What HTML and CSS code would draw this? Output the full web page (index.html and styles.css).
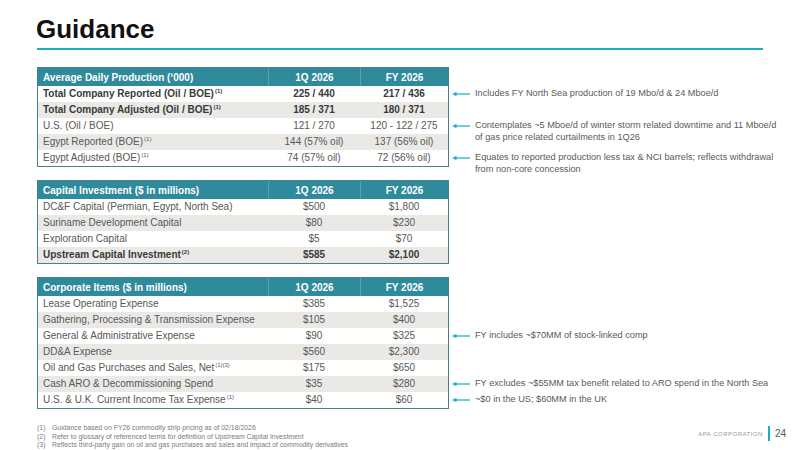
FILE: index.html
```html
<!DOCTYPE html>
<html lang="en">
<head>
    <meta charset="UTF-8">
    <meta name="viewport" content="width=device-width, initial-scale=1.0">
    <title>Guidance</title>
    <link rel="stylesheet" href="styles.css">
</head>
<body>
    <div class="slide">
        <header class="title-bar">
            <h1>Guidance</h1>
            <div class="rule"></div>
        </header>

        <main class="content">
            <section class="block">
                <table class="guide">
                    <colgroup>
                        <col class="col-label">
                        <col class="col-q">
                        <col class="col-fy">
                    </colgroup>
                    <thead>
                        <tr><th>Average Daily Production (‘000)</th><th>1Q 2026</th><th>FY 2026</th></tr>
                    </thead>
                    <tbody>
                        <tr class="strong"><td>Total Company Reported (Oil / BOE)<sup>(1)</sup></td><td>225 / 440</td><td>217 / 436</td></tr>
                        <tr class="strong"><td>Total Company Adjusted (Oil / BOE)<sup>(1)</sup></td><td>185 / 371</td><td>180 / 371</td></tr>
                        <tr><td>U.S. (Oil / BOE)</td><td>121 / 270</td><td>120 - 122 / 275</td></tr>
                        <tr><td>Egypt Reported (BOE)<sup>(1)</sup></td><td>144 (57% oil)</td><td>137 (56% oil)</td></tr>
                        <tr><td>Egypt Adjusted (BOE)<sup>(1)</sup></td><td>74 (57% oil)</td><td>72 (56% oil)</td></tr>
                    </tbody>
                </table>
                <div class="notes">
                    <p class="note row-1">
                        <svg class="arrow" width="18" height="6" viewBox="0 0 18 6"><polygon points="0,3 4.5,0.8 4.5,5.2"/><line x1="4" y1="3" x2="18" y2="3"/></svg>
                        <span>Includes FY North Sea production of 19 Mbo/d &amp; 24 Mboe/d</span>
                    </p>
                    <p class="note row-3">
                        <svg class="arrow" width="18" height="6" viewBox="0 0 18 6"><polygon points="0,3 4.5,0.8 4.5,5.2"/><line x1="4" y1="3" x2="18" y2="3"/></svg>
                        <span>Contemplates ~5 Mboe/d of winter storm related downtime and 11 Mboe/d of gas price related curtailments in 1Q26</span>
                    </p>
                    <p class="note row-5">
                        <svg class="arrow" width="18" height="6" viewBox="0 0 18 6"><polygon points="0,3 4.5,0.8 4.5,5.2"/><line x1="4" y1="3" x2="18" y2="3"/></svg>
                        <span>Equates to reported production less tax &amp; NCI barrels; reflects withdrawal from non-core concession</span>
                    </p>
                </div>
            </section>

            <section class="block">
                <table class="guide">
                    <colgroup>
                        <col class="col-label">
                        <col class="col-q">
                        <col class="col-fy">
                    </colgroup>
                    <thead>
                        <tr><th>Capital Investment ($ in millions)</th><th>1Q 2026</th><th>FY 2026</th></tr>
                    </thead>
                    <tbody>
                        <tr><td>DC&amp;F Capital (Permian, Egypt, North Sea)</td><td>$500</td><td>$1,800</td></tr>
                        <tr><td>Suriname Development Capital</td><td>$80</td><td>$230</td></tr>
                        <tr><td>Exploration Capital</td><td>$5</td><td>$70</td></tr>
                        <tr class="strong"><td>Upstream Capital Investment<sup>(2)</sup></td><td>$585</td><td>$2,100</td></tr>
                    </tbody>
                </table>
            </section>

            <section class="block">
                <table class="guide">
                    <colgroup>
                        <col class="col-label">
                        <col class="col-q">
                        <col class="col-fy">
                    </colgroup>
                    <thead>
                        <tr><th>Corporate Items ($ in millions)</th><th>1Q 2026</th><th>FY 2026</th></tr>
                    </thead>
                    <tbody>
                        <tr><td>Lease Operating Expense</td><td>$385</td><td>$1,525</td></tr>
                        <tr><td>Gathering, Processing &amp; Transmission Expense</td><td>$105</td><td>$400</td></tr>
                        <tr><td>General &amp; Administrative Expense</td><td>$90</td><td>$325</td></tr>
                        <tr><td>DD&amp;A Expense</td><td>$560</td><td>$2,300</td></tr>
                        <tr><td>Oil and Gas Purchases and Sales, Net<sup>(1)(3)</sup></td><td>$175</td><td>$650</td></tr>
                        <tr><td>Cash ARO &amp; Decommissioning Spend</td><td>$35</td><td>$280</td></tr>
                        <tr><td>U.S. &amp; U.K. Current Income Tax Expense<sup>(1)</sup></td><td>$40</td><td>$60</td></tr>
                    </tbody>
                </table>
                <div class="notes">
                    <p class="note row-3">
                        <svg class="arrow" width="18" height="6" viewBox="0 0 18 6"><polygon points="0,3 4.5,0.8 4.5,5.2"/><line x1="4" y1="3" x2="18" y2="3"/></svg>
                        <span>FY includes ~$70MM of stock-linked comp</span>
                    </p>
                    <p class="note row-6">
                        <svg class="arrow" width="18" height="6" viewBox="0 0 18 6"><polygon points="0,3 4.5,0.8 4.5,5.2"/><line x1="4" y1="3" x2="18" y2="3"/></svg>
                        <span>FY excludes ~$55MM tax benefit related to ARO spend in the North Sea</span>
                    </p>
                    <p class="note row-7">
                        <svg class="arrow" width="18" height="6" viewBox="0 0 18 6"><polygon points="0,3 4.5,0.8 4.5,5.2"/><line x1="4" y1="3" x2="18" y2="3"/></svg>
                        <span>~$0 in the US; $60MM in the UK</span>
                    </p>
                </div>
            </section>
        </main>

        <footer class="bottom">
            <ol class="footnotes">
                <li><span class="fn-num">(1)</span>Guidance based on FY26 commodity strip pricing as of 02/18/2026</li>
                <li><span class="fn-num">(2)</span>Refer to glossary of referenced terms for definition of Upstream Capital Investment</li>
                <li><span class="fn-num">(3)</span>Reflects third-party gain on oil and gas purchases and sales and impact of commodity derivatives</li>
            </ol>
            <div class="brand">
                <span class="brand-name">APA CORPORATION</span>
                <span class="brand-bar"></span>
                <span class="page-num">24</span>
            </div>
        </footer>
    </div>
</body>
</html>
```

FILE: styles.css
```css
body {
    margin: 0;
    font-family: "Liberation Sans", Arial, sans-serif;
    background-color: #fff;
}

.slide {
    width: 800px;
    height: 450px;
    display: flex;
    flex-direction: column;
    overflow: hidden;
}

.title-bar {
    padding: 14px 37px 0 36px;
}

.title-bar h1 {
    margin: 0;
    font-size: 26px;
    line-height: 30px;
    font-weight: bold;
    color: #111;
}

.rule {
    height: 2px;
    margin: 4px 0 0 1px;
    background-color: #1aafbf;
}

.content {
    display: flex;
    flex-direction: column;
    gap: 13px;
    padding: 17px 0 0 37px;
}

.block {
    display: flex;
    align-items: flex-start;
    gap: 3px;
}

.guide {
    width: 412px;
    table-layout: fixed;
    border-collapse: separate;
    border-spacing: 0;
    border: 1px solid #4a7f8c;
    font-size: 10px;
    color: #575757;
}

.col-label {
    width: 230px;
}

.col-q {
    width: 92px;
}

.col-fy {
    width: 88px;
}

.guide th {
    height: 18px;
    padding: 0 5px;
    background-color: #2f8a9b;
    color: #fff;
    font-weight: bold;
    text-align: center;
    white-space: nowrap;
}

.guide th:first-child {
    text-align: left;
}

.guide th + th {
    border-left: 1px solid rgba(255, 255, 255, 0.2);
}

.guide td {
    height: 16px;
    padding: 0 5px;
    line-height: 16px;
    text-align: center;
    white-space: nowrap;
}

.guide td:first-child {
    text-align: left;
}

.guide tbody tr:nth-child(even) td {
    background-color: #ebe9e6;
}

.guide tr.strong td {
    font-weight: bold;
    color: #3a3a3a;
}

.guide sup {
    font-size: 6px;
    line-height: 0;
    vertical-align: 4px;
    margin-left: 1px;
}

.notes {
    display: grid;
    grid-template-rows: 19px;
    grid-auto-rows: 16px;
    width: 325px;
}

.note {
    display: flex;
    align-items: flex-start;
    gap: 5px;
    margin: 0;
    padding-top: 2px;
    font-size: 9.2px;
    line-height: 11.5px;
    color: #5a5a5a;
}

.arrow {
    flex: none;
    margin-top: 3px;
}

.arrow polygon {
    fill: #22b2c2;
}

.arrow line {
    stroke: #22b2c2;
    stroke-width: 1.3;
}

.row-1 { grid-row: 2; }
.row-3 { grid-row: 4; }
.row-5 { grid-row: 6; }
.row-6 { grid-row: 7; }
.row-7 { grid-row: 8; }

.bottom {
    display: flex;
    justify-content: space-between;
    align-items: flex-start;
    margin-top: 15px;
    padding: 0 14px 0 37px;
}

.footnotes {
    margin: 0;
    padding: 0;
    list-style: none;
    font-size: 6.9px;
    line-height: 8.5px;
    color: #7a7a7a;
}

.fn-num {
    display: inline-block;
    width: 15px;
}

.brand {
    display: flex;
    align-items: center;
    gap: 5px;
    margin-top: 2px;
}

.brand-name {
    font-size: 6px;
    letter-spacing: 0.5px;
    color: #999;
}

.brand-bar {
    width: 2px;
    height: 15px;
    background-color: #1aafbf;
}

.page-num {
    font-size: 10px;
    color: #555;
}
```
